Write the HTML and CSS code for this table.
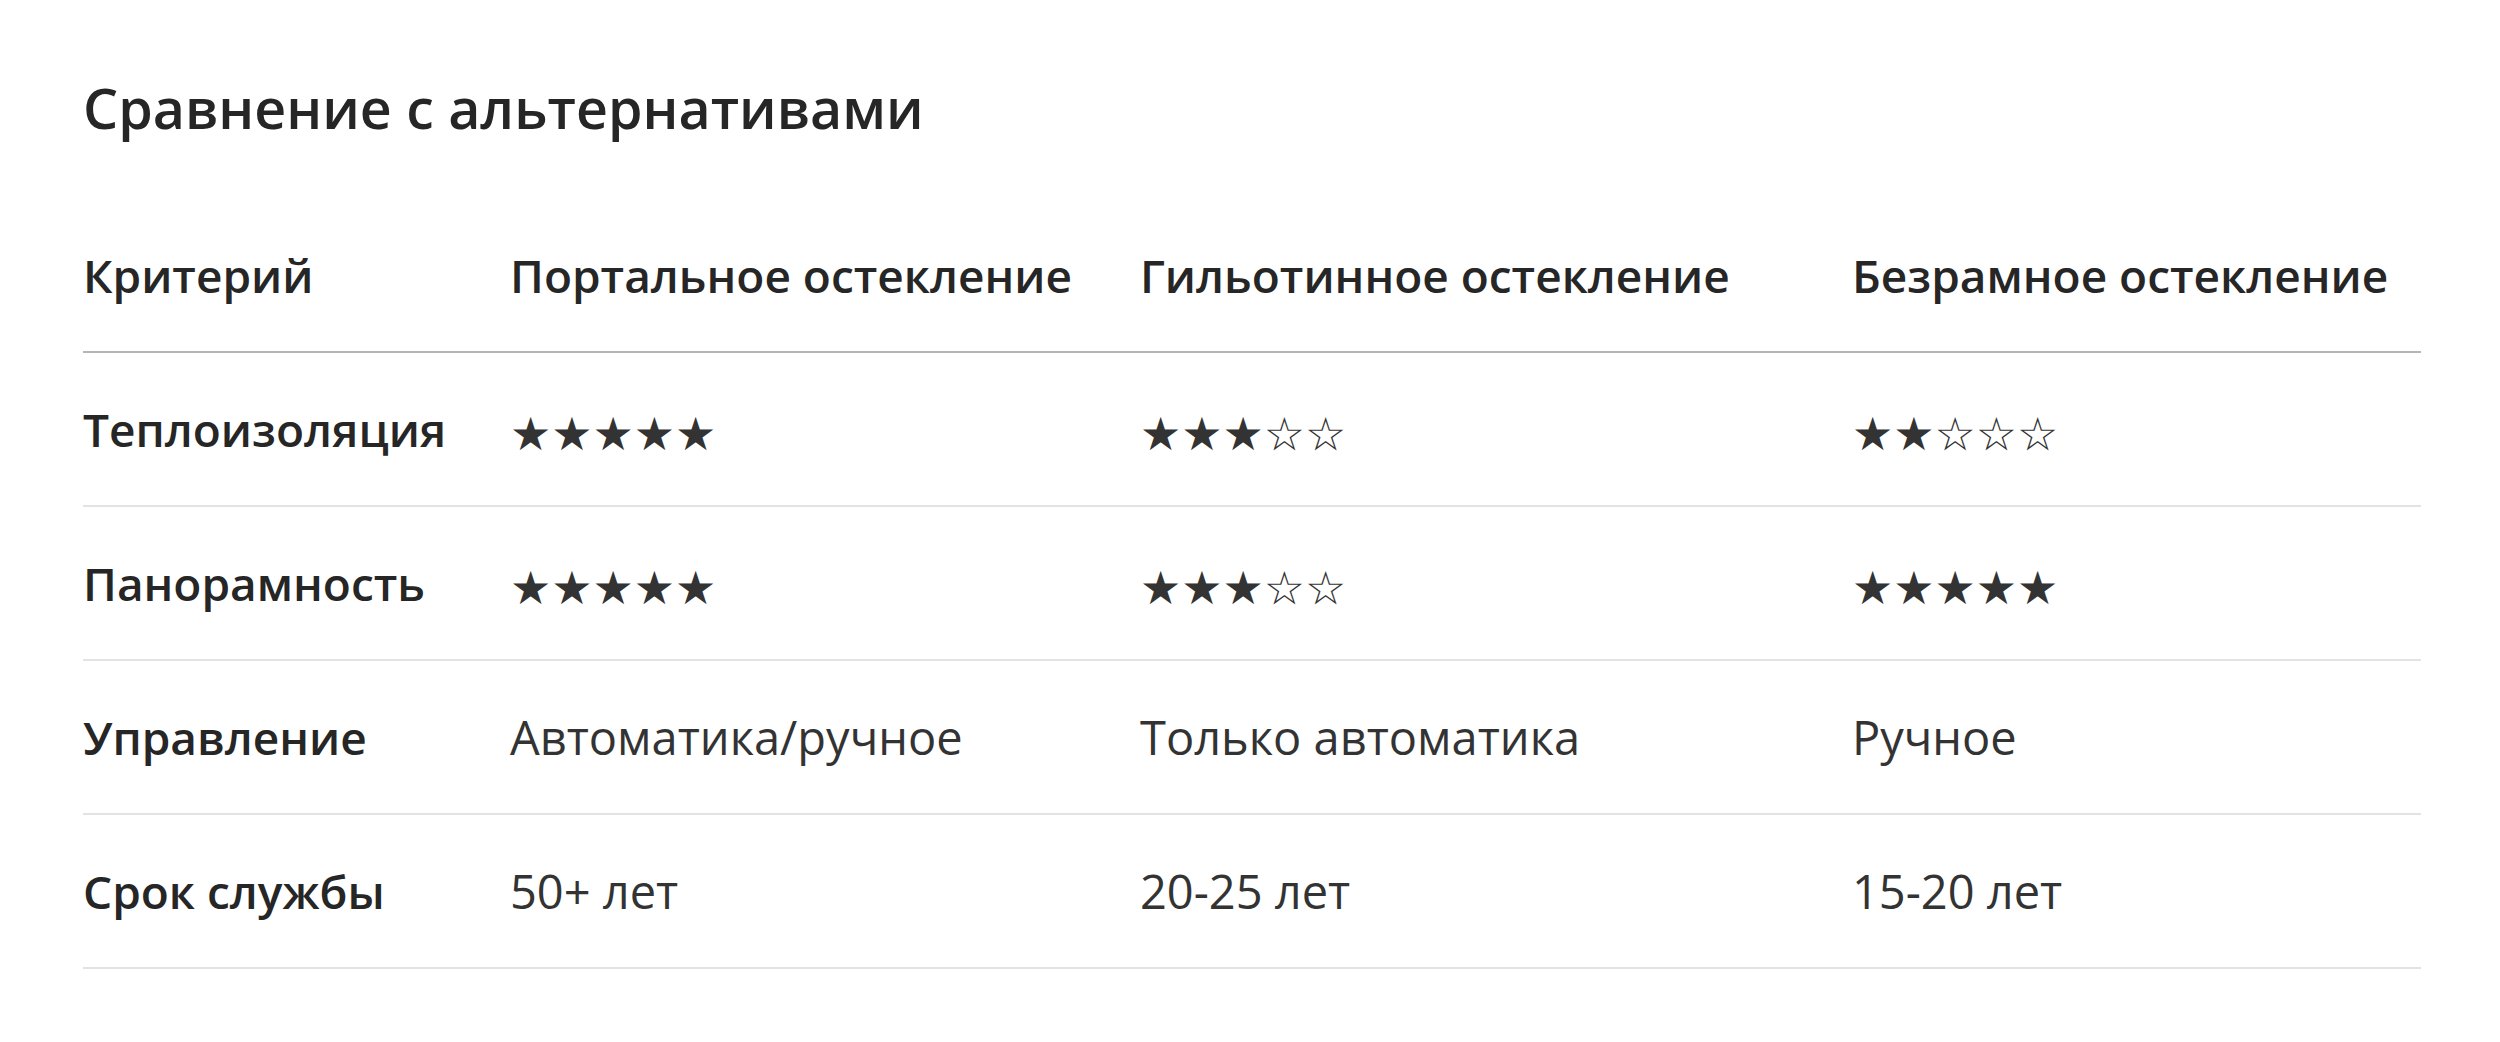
FILE: index.html
```html
<!DOCTYPE html>
<html lang="ru">
<head>
<meta charset="utf-8">
<title>Сравнение с альтернативами</title>
<link rel="stylesheet" href="styles.css">
</head>
<body>
<section class="compare">
  <h2 class="compare-title">Сравнение с альтернативами</h2>
  <table class="compare-table">
    <colgroup>
      <col class="c1"><col class="c2"><col class="c3"><col class="c4">
    </colgroup>
    <thead>
      <tr>
        <th>Критерий</th>
        <th>Портальное остекление</th>
        <th>Гильотинное остекление</th>
        <th>Безрамное остекление</th>
      </tr>
    </thead>
    <tbody>
      <tr>
        <td class="crit">Теплоизоляция</td>
        <td><span class="stars">★★★★★</span></td>
        <td><span class="stars">★★★☆☆</span></td>
        <td><span class="stars">★★☆☆☆</span></td>
      </tr>
      <tr>
        <td class="crit">Панорамность</td>
        <td><span class="stars">★★★★★</span></td>
        <td><span class="stars">★★★☆☆</span></td>
        <td><span class="stars">★★★★★</span></td>
      </tr>
      <tr>
        <td class="crit">Управление</td>
        <td>Автоматика/ручное</td>
        <td>Только автоматика</td>
        <td>Ручное</td>
      </tr>
      <tr>
        <td class="crit">Срок службы</td>
        <td>50+ лет</td>
        <td>20-25 лет</td>
        <td>15-20 лет</td>
      </tr>
    </tbody>
  </table>
</section>
</body>
</html>
```
FILE: styles.css
```css
html, body {
  margin: 0;
  background: #ffffff;
}
body {
  font-family: "Open Sans", "Noto Sans", "DejaVu Sans", sans-serif;
  color: #333333;
}
.compare {
  padding: 68px 79px 0 83px;
}
.compare-title {
  margin: 0;
  font-size: 55.5px;
  line-height: 80px;
  font-weight: 600;
  color: #262626;
}
.compare-table {
  margin-top: 51px;
  width: 2338px;
  border-collapse: collapse;
  table-layout: fixed;
  font-size: 47px;
}
.c1 { width: 427px; }
.c2 { width: 630px; }
.c3 { width: 712px; }
.c4 { width: 569px; }
.compare-table th,
.compare-table td {
  text-align: left;
  padding: 42px 16px 41px 0;
  line-height: 69px;
  height: 69px;
  white-space: nowrap;
}
.compare-table th {
  font-size: 46px;
  font-weight: 600;
  color: #262626;
  border-bottom: 2px solid #b5b5b5;
}
.compare-table td {
  border-bottom: 2px solid #e3e3e3;
}
.compare-table .crit {
  font-size: 46px;
  font-weight: 600;
  color: #262626;
}
.stars {
  font-family: "DejaVu Sans", sans-serif;
  font-size: 46px;
  line-height: 40px;
  display: inline-block;
  vertical-align: middle;
  color: #333333;
}
```
